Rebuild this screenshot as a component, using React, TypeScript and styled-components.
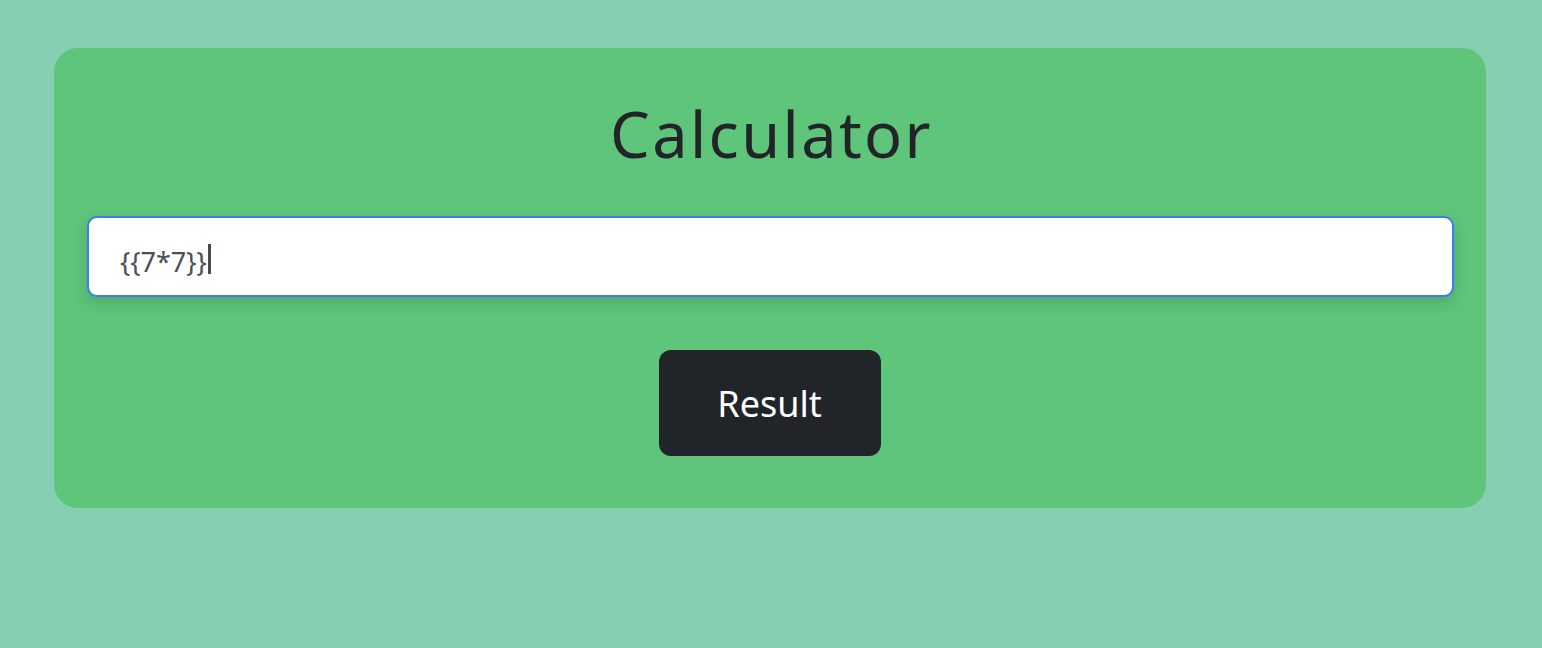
import React, { useState } from "react";
import styled, { createGlobalStyle } from "styled-components";

const Global = createGlobalStyle`
  html, body { margin: 0; padding: 0; background: #87cfb2; }
  body { font-family: "Noto Sans", "Open Sans", sans-serif; }
  * { box-sizing: border-box; }
`;

const Page = styled.div`
  min-height: 648px;
  background: #87cfb2;
  padding: 48px 56px 0 54px;
`;

const Card = styled.div`
  background: #5ec57a;
  border-radius: 24px;
  padding: 44px 32px 52px 33px;
  display: flex;
  flex-direction: column;
  align-items: center;
`;

const Title = styled.h1`
  margin: 0;
  padding-left: 2px;
  font-family: "Noto Sans", sans-serif;
  font-weight: 400;
  font-size: 63px;
  line-height: 84px;
  color: #212529;
  letter-spacing: 2.4px;
`;

const FieldWrap = styled.div`
  position: relative;
  margin-top: 40px;
  width: 100%;
`;

const Field = styled.input`
  display: block;
  width: 100%;
  height: 81px;
  border: 2px solid #3b7cf3;
  border-radius: 10px;
  background: #fff;
  padding: 10px 31px 0;
  font-family: "Noto Sans", sans-serif;
  font-size: 27px;
  color: #495057;
  caret-color: transparent;
  outline: none;
  box-shadow: 0 6px 14px rgba(40, 90, 60, 0.25);
`;

const CaretLayer = styled.div`
  position: absolute;
  inset: 0;
  display: flex;
  align-items: center;
  padding: 0 33px;
  pointer-events: none;
  font-family: "Noto Sans", sans-serif;
  font-size: 27px;
  white-space: pre;
`;

const Ghost = styled.span`
  visibility: hidden;
`;

const Caret = styled.span`
  display: block;
  width: 3px;
  height: 30px;
  margin-top: 4px;
  margin-left: 1px;
  background: #464b52;
`;

const Button = styled.button`
  margin-top: 53px;
  width: 222px;
  height: 106px;
  border: none;
  border-radius: 12px;
  background: #212529;
  color: #fff;
  font-family: "Noto Sans", sans-serif;
  font-size: 36px;
  font-weight: 400;
  cursor: pointer;
  transform: translateX(-1px);
`;

export default function App() {
  const [value, setValue] = useState("{{7*7}}");
  return (
    <Page>
      <Global />
      <Card>
        <Title>Calculator</Title>
        <FieldWrap>
          <Field autoFocus value={value} onChange={(e) => setValue(e.target.value)} />
          <CaretLayer aria-hidden="true">
            <Ghost>{value}</Ghost>
            <Caret />
          </CaretLayer>
        </FieldWrap>
        <Button>Result</Button>
      </Card>
    </Page>
  );
}
